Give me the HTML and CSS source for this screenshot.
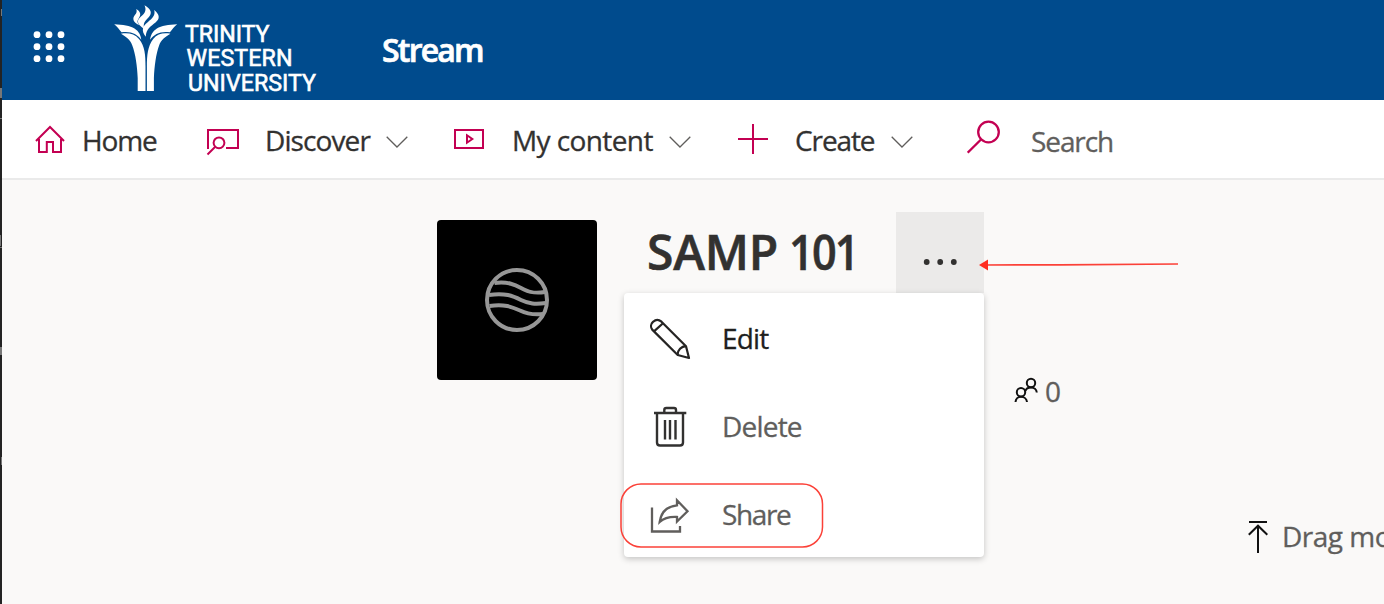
FILE: index.html
```html
<!DOCTYPE html>
<html lang="en">
<head>
<meta charset="utf-8">
<title>Stream</title>
<link rel="stylesheet" href="styles.css">
</head>
<body>
<div class="edge"><svg width="2" height="604" viewBox="0 0 2 604"><path fill="#777" d="M0 88h2v10H0zM0 118h2v1H0zM0 235h1v11H0zM0 247h2v1H0zM0 347h2v8H0zM1 457h1v8H1zM1 9h1v7H1z"/></svg></div>
<div class="app">
  <header class="suite">
    <svg class="waffle" width="32" height="32" viewBox="33 31 32 32" fill="#fff"><circle cx="37" cy="34.7" r="3.4"/><circle cx="49" cy="34.7" r="3.4"/><circle cx="61" cy="34.7" r="3.4"/><circle cx="37" cy="46.7" r="3.4"/><circle cx="49" cy="46.7" r="3.4"/><circle cx="61" cy="46.7" r="3.4"/><circle cx="37" cy="58.7" r="3.4"/><circle cx="49" cy="58.7" r="3.4"/><circle cx="61" cy="58.7" r="3.4"/></svg>
    <svg class="logo" width="210" height="100" viewBox="112 0 210 100" fill="#fff">
      <path d="M114.200 24.300C123 24.700 130 25.800 134.500 28.600C139 31.500 140.700 35.500 141.300 39.800C137 34 131 30.900 121.500 32.300C119.300 29.500 117 26.500 114.200 24.300Z"/>
      <path d="M121 33.800C128 32.500 134.500 33.800 139 39C145 46.500 145.500 55 145.500 67V91H137.700V78C137.200 66 135.500 54 132.300 45.500C130.500 40 126.500 37 121 33.800Z"/>
      <path d="M177.200 24.300C168.400 24.700 161.400 25.800 156.900 28.600C152.400 31.500 150.700 35.500 150.100 39.800C154.400 34 160.400 30.900 169.900 32.300C172.100 29.500 174.400 26.500 177.200 24.300Z"/>
      <path d="M170.400 33.800C163.500 32.500 157.500 33.800 153.200 39C147.700 46.500 146.900 55 146.900 67V91H153.900V78C154.400 66 156 54 159.100 45.500C161 40 164.900 37 170.400 33.800Z"/>
      <path d="M136.200 9C140.800 11.600 141.200 14.800 138.900 18C136.900 20.700 137 22.600 139.200 25.200C132.700 22.100 132.200 18.400 134.900 15.100C136.800 12.700 137.100 11.200 136.200 9Z"/>
      <path d="M144.500 5.300C151.500 9.300 152.300 13.500 148.700 17.300C145.400 20.900 142.300 23.300 144.500 29.300C136.500 24.200 136.500 20.300 141 16.600C145.300 13 146.600 10 144.500 5.300Z"/>
      <path d="M154.200 10.100C160 14.700 160 19 155.500 22.600C151 26.200 146 29 145.800 36.800C141 30.300 142.500 26.200 147.700 22.200C153 18.100 155.500 15 154.200 10.100Z"/>
      <text class="wordmark" x="185" y="41.500" textLength="84.500">TRINITY</text>
      <text class="wordmark" x="186.500" y="66.200" textLength="106">WESTERN</text>
      <text class="wordmark" x="188" y="91" textLength="128">UNIVERSITY</text>
    </svg>
    <span class="product">Stream</span>
  </header>

  <nav class="nav">
    <a class="item home"><svg width="30" height="30" viewBox="35 125 30 30" fill="none" stroke="#c30052" stroke-width="2"><path d="M36 141L50 127L64 141M39 139V152H46.800V142H53V152H61V139"/></svg><span class="label">Home</span></a>
    <a class="item discover"><svg width="34" height="30" viewBox="206 127 34 30" fill="none" stroke="#c30052" stroke-width="2"><path d="M208 149V130H238V148H226"/><circle cx="219" cy="142.800" r="5.400"/><path d="M215 147L207.500 154.500"/></svg><span class="label">Discover</span><svg class="chev" width="22" height="12" viewBox="0 0 22 12"><path d="M.7.700L11 11L21.300.700"/></svg></a>
    <a class="item content"><svg width="30" height="20" viewBox="454 129 30 20" fill="none" stroke="#c30052" stroke-width="2"><path d="M455 130H483V148H455Z"/><path d="M467 135.300L472.300 139L467 142.700Z"/></svg><span class="label">My content</span><svg class="chev" width="22" height="12" viewBox="0 0 22 12"><path d="M.7.700L11 11L21.300.700"/></svg></a>
    <a class="item create"><svg width="30" height="30" viewBox="0 0 30 30" fill="none" stroke="#c30052" stroke-width="2"><path d="M0 15H30M15 0V30"/></svg><span class="label">Create</span><svg class="chev" width="22" height="12" viewBox="0 0 22 12"><path d="M.7.700L11 11L21.300.700"/></svg></a>
    <a class="item search"><svg width="34" height="34" viewBox="967 120 34 34" fill="none" stroke="#c30052" stroke-width="2.300"><circle cx="988.500" cy="132" r="10.300"/><path d="M981 139.500L967.700 152.700"/></svg><span class="label">Search</span></a>
  </nav>

  <main class="channel">
    <div class="thumb"><svg width="64" height="64" viewBox="485 268 64 64" fill="none" stroke="#979797" stroke-width="4"><circle cx="517" cy="300" r="30"/><path d="M494.500 283C510 281 517 286 524 289.500C531 293 536 293.500 545 292M489 295C505 292.500 513 296 521 300C529 303.800 535 304.500 546 303M489.500 306C504 303.500 512 307 520 310.500C527 314 534 315 543 314"/></svg></div>
    <div class="details">
      <div class="titlebar">
        <h1 class="title">SAMP <span class="number">101</span></h1>
        <div class="more">
          <svg width="34" height="6" viewBox="923 259 34 6" fill="#323130"><circle cx="926.700" cy="262" r="2.900"/><circle cx="940.200" cy="262" r="2.900"/><circle cx="953.800" cy="262" r="2.900"/></svg>
          <div class="menu">
            <div class="option edit"><svg width="42" height="42" viewBox="649 318 42 42" fill="none" stroke="#252423" stroke-width="2.200" stroke-linejoin="round"><path d="M652.200 329.600C650.200 327 651 323.600 653.200 321.700C655.700 319.300 659 319.500 661.500 321.700L686 346.200L689 358L677.700 355ZM654 331.400L663 323.200M677.700 355C677.500 350 681.300 346.500 686 346.200"/></svg><span>Edit</span></div>
            <div class="option delete"><svg width="42" height="42" viewBox="649 406 42 42" fill="none" stroke="#323130" stroke-width="2.400"><path d="M654 413H686.300M657 413V442.500Q657 445.500 660 445.500H680Q683 445.500 683 442.500V413M664.300 413V410Q664.300 408 666.300 408H674Q676 408 676 410V413M665 420V439.500M670 420V439.500M675.500 420V439.500"/></svg><span>Delete</span></div>
            <div class="option share"><svg width="42" height="42" viewBox="649 494 42 42" fill="none" stroke="#605e5c" stroke-width="2.300"><path d="M652 507.500V531.500H680V526M659.700 522C661 512.500 667 506.300 677 505.300V500.300L687.500 511.200L677 521.500V517C669 516.600 664 518 659.700 522Z"/></svg><span>Share</span></div>
            <svg class="highlight" width="206" height="68" viewBox="619 482 206 68" fill="none" stroke="#fb4138" stroke-width="1.500"><rect x="621" y="484" width="201.500" height="63" rx="20"/></svg>
          </div>
        </div>
      </div>
      <div class="followers"><svg width="24" height="26" viewBox="1014 377 24 26" fill="none" stroke="#111" stroke-width="2"><circle cx="1031" cy="383" r="4.200"/><circle cx="1021" cy="392.200" r="4.200"/><path d="M1015.500 402C1015.700 399 1018 396.800 1021 396.800S1026.700 399 1027 402M1025.500 391C1026 388.500 1028 387.500 1031 387.500C1034 387.500 1036.500 389.500 1036.800 392.500"/></svg><span>0</span></div>
      <div class="upload"><svg width="20" height="34" viewBox="1248 520 20 34" fill="none" stroke="#111" stroke-width="2"><path d="M1249 522H1267M1258 553V526M1248.800 534.800L1258 525.700L1267.300 534.800"/></svg><span>Drag more videos here</span></div>
    </div>
    <svg class="arrow" width="204" height="14" viewBox="977 258 204 14"><path fill="none" stroke="#fb4138" stroke-width="1.700" d="M984 265L1060 264.800L1178 264"/><path fill="#ff2d20" d="M979 265L988 259.600V270.500Z"/></svg>
  </main>
</div>
</body>
</html>
```
FILE: styles.css
```css
* { box-sizing: border-box; }
body { margin: 0; width: 1384px; height: 604px; overflow: hidden; display: flex; background: #faf9f8; font-family: "Open Sans", "Noto Sans", sans-serif; font-size: 28px; color: #323130; }
svg { display: block; flex: none; }
span { white-space: nowrap; -webkit-text-stroke: 0.3px currentColor; }
.edge { width: 2px; flex: none; background: #232323; }
.app { width: 1382px; height: 604px; flex: none; overflow: hidden; }
.suite { height: 100px; background: #004b8d; display: flex; align-items: center; }
.waffle { margin: -6px 0 0 31px; }
.logo { margin-left: 47px; }
.wordmark { font-family: Roboto, sans-serif; font-size: 23.2px; font-weight: 400; stroke: #fff; stroke-width: 0.6px; }
.product { margin-left: 60px; padding-bottom: 2px; font-size: 32px; font-weight: 600; color: #fff; letter-spacing: -1.8px; -webkit-text-stroke-width: 0.7px; }
.nav { height: 80px; background: #fff; border-bottom: 2px solid #eaeaea; display: flex; align-items: center; }
.item { display: flex; align-items: center; flex: none; }
.label { padding-top: 2px; flex: none; letter-spacing: -0.9px; }
.home { width: 171px; margin-left: 33px; }
.home > svg { margin-top: 2px; }
.home .label { margin-left: 17px; letter-spacing: -1.1px; }
.discover { width: 248px; }
.discover .label { margin-left: 25px; width: 121px; }
.discover > svg:first-child { margin-top: 5px; }
.content { width: 284px; }
.content .label { margin-left: 28px; width: 157px; letter-spacing: -0.6px; }
.create { width: 229px; }
.create .label { margin-left: 27px; width: 96px; letter-spacing: -1.1px; }
.search .label { margin-left: 30px; padding-top: 4px; color: #605e5c; letter-spacing: -1.1px; }
.search svg { margin-top: -4px; }
.chev { fill: none; stroke: #605e5c; stroke-width: 1.3; }
.discover .chev, .content .chev, .create .chev { margin-top: 5px; }
.channel { position: relative; height: 424px; display: flex; padding-left: 435px; }
.thumb { width: 160px; height: 160px; margin-top: 40px; border-radius: 4px; background: #000; display: grid; place-items: center; flex: none; }
.details { margin-left: 50px; width: 800px; flex: none; padding-top: 32px; }
.titlebar { display: flex; }
.title { width: 249px; margin: 8px 0 0; font-size: 48px; line-height: 64px; font-weight: 600; letter-spacing: -0.2px; word-spacing: -1px; white-space: nowrap; -webkit-text-stroke: 0.6px currentColor; }
.number { display: inline-block; letter-spacing: -2px; transform: scaleX(0.9); transform-origin: left; -webkit-text-stroke-width: 0.6px; }
.more { position: relative; width: 88px; height: 81px; background: #ebeae9; padding: 47px 0 0 27px; }
.menu { position: absolute; top: 81px; left: -272px; width: 360px; height: 264px; padding-top: 2px; background: #fff; border-radius: 4px; box-shadow: 0 2px 6px rgba(0,0,0,.22); color: #605e5c; }
.option { height: 88px; display: flex; align-items: center; padding-left: 25px; gap: 31px; letter-spacing: -0.8px; }
.option span { padding-bottom: 2px; }
.edit { color: #201f1e; }
.share { letter-spacing: -1.4px; }
.highlight { position: absolute; left: -5px; top: 189px; }
.followers { display: flex; align-items: center; gap: 7px; height: 40px; margin: 79px 0 0 367px; color: #605e5c; }
.followers svg { margin-top: -4px; }
.followers span { padding-bottom: 2px; }
.upload { display: flex; align-items: center; gap: 14px; height: 40px; margin: 105px 0 0 601px; color: #605e5c; letter-spacing: -0.5px; }
.upload span { padding-bottom: 2px; }
.arrow { position: absolute; left: 975px; top: 78px; }
```
